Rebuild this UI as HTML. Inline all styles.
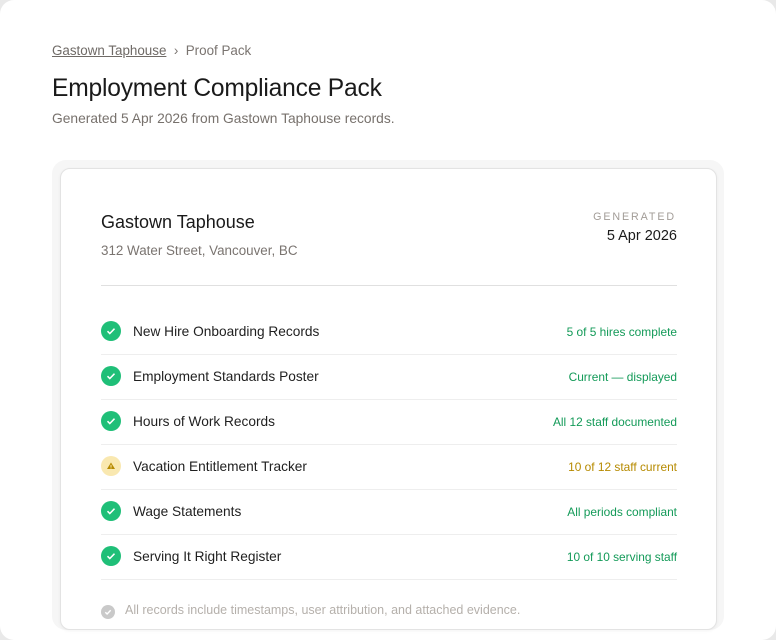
<!DOCTYPE html>
<html><head><meta charset="utf-8"><style>
html,body{margin:0;padding:0;background:#e9e9e9;}
body{width:776px;height:612px;overflow:hidden;font-family:"Liberation Sans",sans-serif;position:relative;}
.page{position:absolute;left:0;top:0;width:776px;height:640px;background:#fff;border-radius:14px;}
.bc{position:absolute;left:52px;top:43px;font-size:13.4px;color:#7a7470;}
.bc u{text-decoration:underline;color:#6f6a66;}
h1{position:absolute;left:52px;top:75px;margin:0;font-size:24.6px;font-weight:normal;color:#1a1a1a;letter-spacing:-0.2px;}
.sub{position:absolute;left:52px;top:111px;font-size:13.8px;color:#77716c;}
.wrap{position:absolute;left:52px;top:160px;width:672px;height:470px;background:#f6f6f6;border-radius:14px;}
.card{position:absolute;left:60px;top:168px;width:655px;height:460px;background:#fff;border:1px solid #e3e3e3;border-radius:10px;box-shadow:0 1px 3px rgba(0,0,0,.05);}
.name{position:absolute;left:40px;top:43px;font-size:18px;color:#1a1a1a;}
.addr{position:absolute;left:40px;top:74px;font-size:13.4px;color:#7a7470;}
.gl{position:absolute;right:40px;top:42px;font-size:10.7px;letter-spacing:1.9px;color:#a29c97;}
.gd{position:absolute;right:39px;top:59px;font-size:14.5px;color:#1a1a1a;}
.hr{position:absolute;left:40px;right:39px;top:116px;border-top:1px solid #e0e0e0;}
.row{position:absolute;left:40px;right:39px;height:45px;border-bottom:1px solid #eeeeee;}
.ic{position:absolute;left:0;top:12px;width:20px;height:20px;border-radius:50%;background:#1fbf78;}
.ic.w{background:#f9e8b0;}
.lbl{position:absolute;left:32px;top:15px;font-size:13.7px;color:#1f1f1f;}
.st{position:absolute;right:0;top:16px;font-size:11.9px;color:#139a58;}
.st.w{color:#b68a00;}
.foot{position:absolute;left:40px;top:434px;font-size:12.5px;color:#b5b0ab;}
.fi{position:absolute;left:0;top:2px;width:14px;height:14px;border-radius:50%;background:#c9c9c9;}
</style></head><body>
<div class="page">
<div class="bc"><u>Gastown Taphouse</u> &nbsp;›&nbsp; Proof Pack</div>
<h1>Employment Compliance Pack</h1>
<div class="sub">Generated 5 Apr 2026 from Gastown Taphouse records.</div>
<div class="wrap"></div>
<div class="card">
<div class="name">Gastown Taphouse</div>
<div class="addr">312 Water Street, Vancouver, BC</div>
<div class="gl">GENERATED</div>
<div class="gd">5 Apr 2026</div>
<div class="hr"></div>

<div class="row" style="top:140px"><div class="ic"><svg width="20" height="20"><path d="M6.5 10.2l2.3 2.3 4.7-4.8" fill="none" stroke="#fff" stroke-width="1.5"/></svg></div><div class="lbl">New Hire Onboarding Records</div><div class="st">5 of 5 hires complete</div></div>
<div class="row" style="top:185px"><div class="ic"><svg width="20" height="20"><path d="M6.5 10.2l2.3 2.3 4.7-4.8" fill="none" stroke="#fff" stroke-width="1.5"/></svg></div><div class="lbl">Employment Standards Poster</div><div class="st">Current — displayed</div></div>
<div class="row" style="top:230px"><div class="ic"><svg width="20" height="20"><path d="M6.5 10.2l2.3 2.3 4.7-4.8" fill="none" stroke="#fff" stroke-width="1.5"/></svg></div><div class="lbl">Hours of Work Records</div><div class="st">All 12 staff documented</div></div>
<div class="row" style="top:275px"><div class="ic w"><svg width="20" height="20"><path d="M10 6.5L14 13H6z" fill="#b68a00"/><rect x="9.5" y="8.8" width="1" height="2.3" fill="#f9e8b0"/><rect x="9.5" y="11.5" width="1" height="0.9" fill="#f9e8b0"/></svg></div><div class="lbl">Vacation Entitlement Tracker</div><div class="st w">10 of 12 staff current</div></div>
<div class="row" style="top:320px"><div class="ic"><svg width="20" height="20"><path d="M6.5 10.2l2.3 2.3 4.7-4.8" fill="none" stroke="#fff" stroke-width="1.5"/></svg></div><div class="lbl">Wage Statements</div><div class="st">All periods compliant</div></div>
<div class="row" style="top:365px"><div class="ic"><svg width="20" height="20"><path d="M6.5 10.2l2.3 2.3 4.7-4.8" fill="none" stroke="#fff" stroke-width="1.5"/></svg></div><div class="lbl">Serving It Right Register</div><div class="st">10 of 10 serving staff</div></div>

<div class="foot"><span class="fi"><svg width="14" height="14"><path d="M4.3 7.2l1.8 1.8 3.6-3.7" fill="none" stroke="#fff" stroke-width="1.4"/></svg></span><span style="margin-left:24px">All records include timestamps, user attribution, and attached evidence.</span></div>
</div>
</div>
</body></html>
